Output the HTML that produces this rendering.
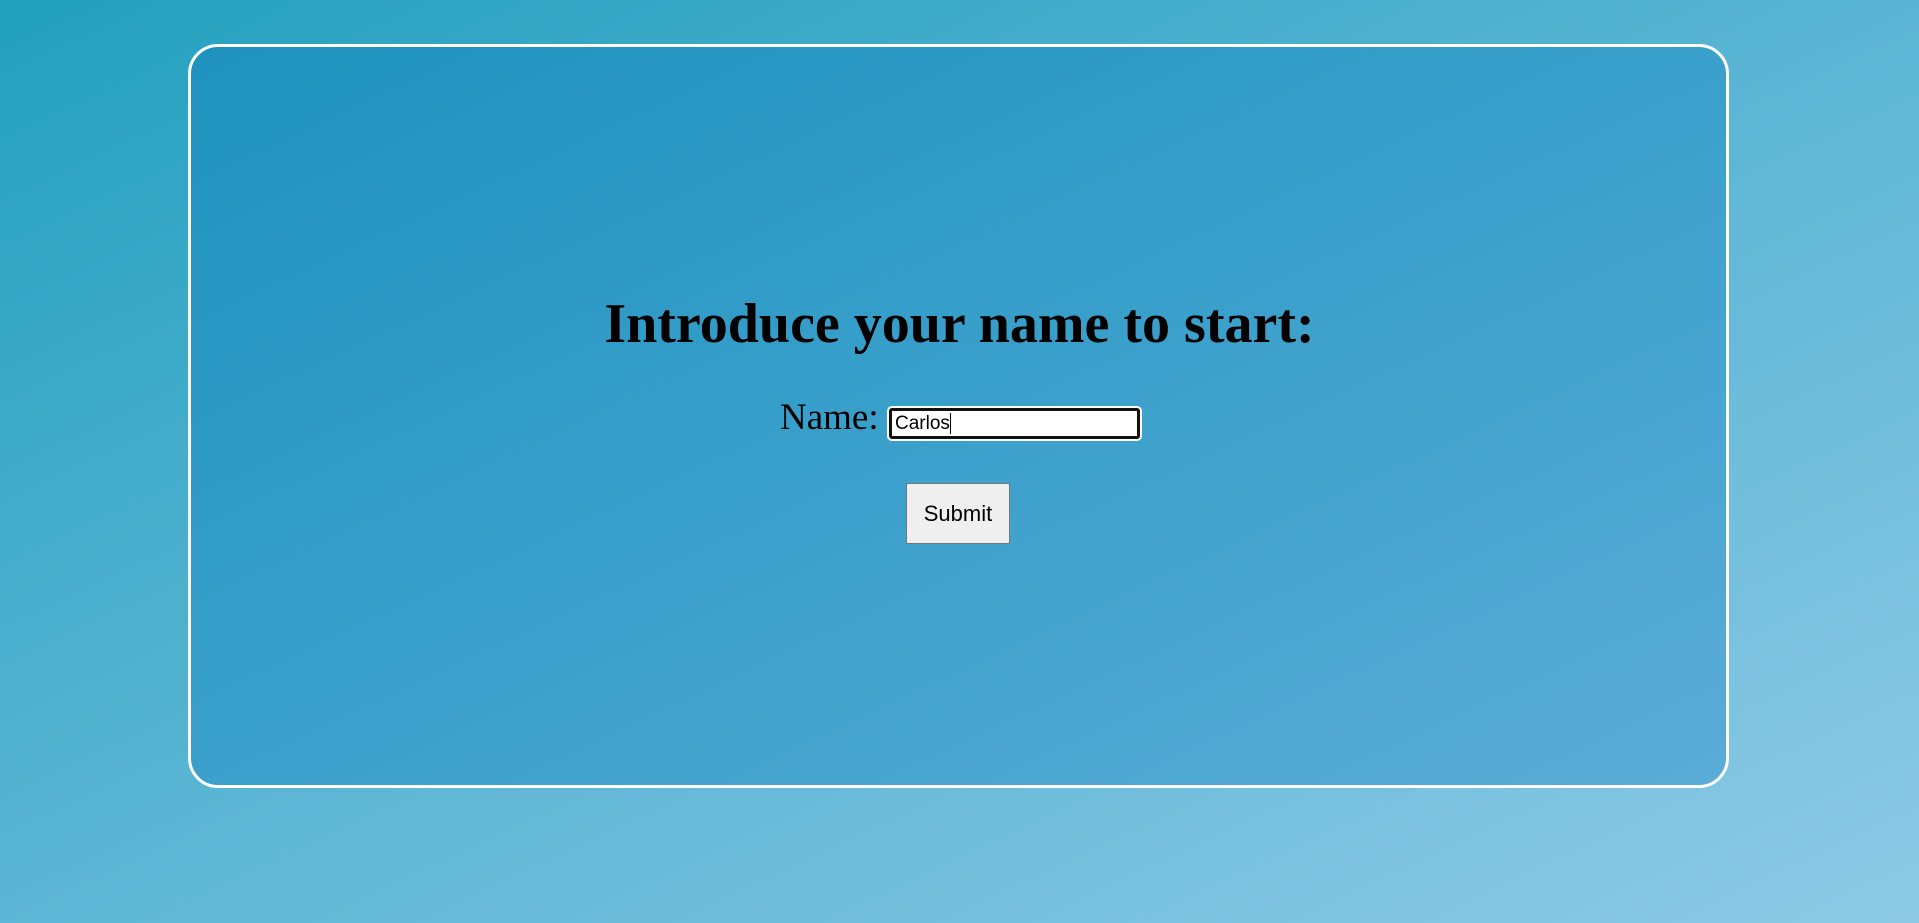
<!DOCTYPE html>
<html><head><meta charset="utf-8"><style>
html,body{margin:0;padding:0;width:1919px;height:923px;overflow:hidden}
body{background:linear-gradient(155deg,#22a0be 0%,#5bb5d4 50%,#8ecae6 100%);position:relative;font-family:"Liberation Serif",serif}
.box{position:absolute;left:188px;top:44px;width:1535px;height:738px;border:3px solid #fff;border-radius:30px;background:linear-gradient(155deg,#1e92bf 0%,#3aa0cb 50%,#5aacd6 100%)}
h1{position:absolute;left:0;width:1919px;top:289px;margin:0;text-align:center;font-size:56px;font-weight:bold;line-height:70px;color:#000}
.lbl{position:absolute;left:780px;top:395px;font-size:37px;line-height:46px;color:#000}
.inp{position:absolute;left:889px;top:408px;width:242px;height:25px;background:#fff;border:3px solid #111;border-radius:3px;box-shadow:0 0 0 2px #fff;font-family:"Liberation Sans",sans-serif;font-size:19px;line-height:25px;padding-left:3px;box-sizing:content-box;color:#000}
.inp span{border-right:1px solid #000}
.btn{position:absolute;left:906px;top:483px;width:102px;height:59px;background:#efefef;border:1px solid #767676;border-radius:2px;font-family:"Liberation Sans",sans-serif;font-size:22px;line-height:59px;text-align:center;color:#000}
</style></head><body>
<div class="box"></div>
<h1>Introduce your name to start:</h1>
<div class="lbl">Name:</div>
<div class="inp"><span>Carlos</span></div>
<div class="btn">Submit</div>
</body></html>
